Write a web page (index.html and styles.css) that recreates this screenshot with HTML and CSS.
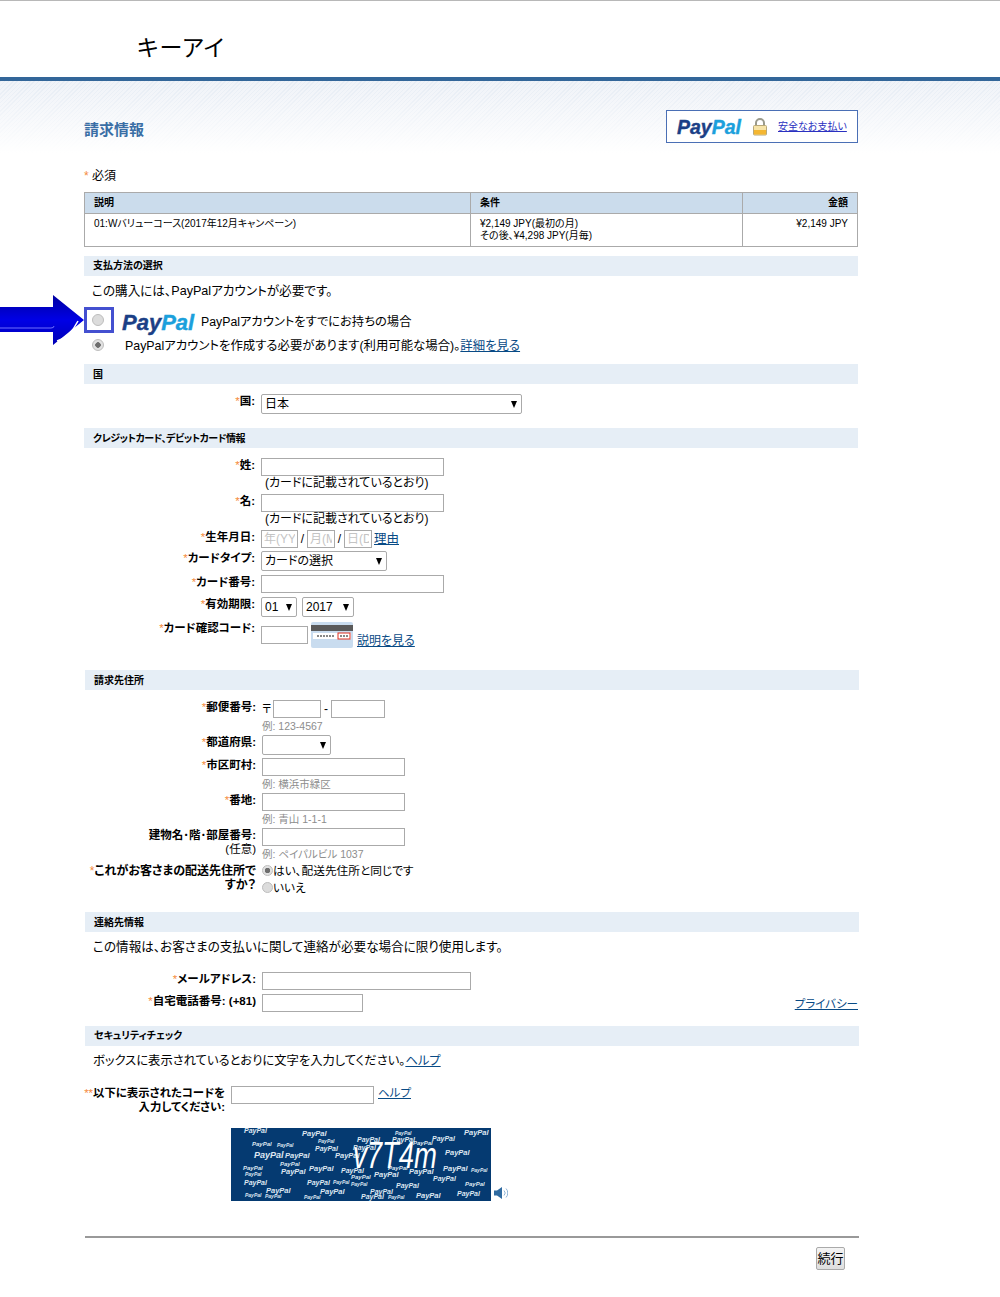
FILE: index.html
```html
<!DOCTYPE html>
<html lang="ja">
<head>
<meta charset="utf-8">
<title>請求情報</title>
<link rel="stylesheet" href="styles.css">
</head>
<body>
<header class="site-head"><span class="merchant">キーアイ</span></header>
<main class="content">
  <div class="title-row">
    <h1>請求情報</h1>
    <div class="secure-box">
      <span class="pp pp-small"><i>Pay</i><b>Pal</b></span>
      <svg class="lock" viewBox="0 0 16 18" width="16" height="18"><path d="M4 8V5a4 4 0 0 1 8 0v3" fill="none" stroke="#9a9a8c" stroke-width="2"/><rect x="1.500" y="7.500" width="13" height="9.500" rx="1" fill="#f7e4a8" stroke="#b8a878"/><rect x="2" y="12" width="12" height="4.500" fill="#f4b631"/></svg>
      <a class="secure-link" href="#">安全なお支払い</a>
    </div>
  </div>
  <p class="req"><span class="ast">*</span> 必須</p>
  <table class="order">
    <colgroup><col class="c1"><col class="c2"><col class="c3"></colgroup>
    <thead><tr><th>説明</th><th>条件</th><th class="num">金額</th></tr></thead>
    <tbody><tr><td>01:Wバリューコース(2017年12月キャンペーン)</td><td>¥2,149 JPY(最初の月)<br>その後、¥4,298 JPY(月毎)</td><td class="num">¥2,149 JPY</td></tr></tbody>
  </table>

  <h2 class="bar bar-pay">支払方法の選択</h2>
  <p class="note note-pay">この購入には、PayPalアカウントが必要です。</p>
  <div class="opt opt-one">
    <span class="focus-box"><input class="radio" type="radio" name="pay" disabled></span>
    <span class="pp pp-large"><i>Pay</i><b>Pal</b></span>
    <span class="opt-text">PayPalアカウントをすでにお持ちの場合</span>
    <svg class="arrow" viewBox="0 0 84 50" width="84" height="50"><defs><linearGradient id="ag" x1="0" y1="0" x2="0" y2="1"><stop offset="0" stop-color="#0000a0"/><stop offset=".5" stop-color="#0000e6"/><stop offset="1" stop-color="#0000b4"/></linearGradient></defs><polygon points="0,12 53,12 53,0 84,25 53,50 53,37 0,37" fill="url(#ag)"/><path d="M0 33H51q3 0 3-2" fill="none" stroke="#6f6fff" stroke-width="1"/><path d="M57 46Q70 42 78 26" fill="none" stroke="#fff" stroke-width="1.500"/></svg>
  </div>
  <div class="opt opt-two">
    <input class="radio" type="radio" name="pay" checked disabled>
    <span class="opt-text-two">PayPalアカウントを作成する必要があります(利用可能な場合)。<a href="#">詳細を見る</a></span>
  </div>

  <h2 class="bar bar-country">国</h2>
  <div class="row r-country"><label><span class="ast">*</span>国:</label><div class="field"><span class="sel s-country"><select><option>日本</option></select></span></div></div>

  <h2 class="bar bar-card">クレジットカード、デビットカード情報</h2>
  <div class="row r-name"><label><span class="ast">*</span>姓:</label><div class="field stack"><input class="in w183" type="text"><span class="as-on-card">(カードに記載されているとおり)</span></div></div>
  <div class="row r-name"><label><span class="ast">*</span>名:</label><div class="field stack"><input class="in w183" type="text"><span class="as-on-card">(カードに記載されているとおり)</span></div></div>
  <div class="row r-dob"><label><span class="ast">*</span>生年月日:</label><div class="field inline"><input class="in w37 ph" type="text" placeholder="年(YY"><span class="slash">/</span><input class="in w28 ph" type="text" placeholder="月(M"><span class="slash">/</span><input class="in w28 ph" type="text" placeholder="日(D"><a class="why" href="#">理由</a></div></div>
  <div class="row r-type"><label><span class="ast">*</span>カードタイプ:</label><div class="field"><span class="sel s-type"><select><option>カードの選択</option></select></span></div></div>
  <div class="row r-num"><label><span class="ast">*</span>カード番号:</label><div class="field"><input class="in w183" type="text"></div></div>
  <div class="row r-exp"><label><span class="ast">*</span>有効期限:</label><div class="field gap5"><span class="sel s-mon"><select><option>01</option></select></span><span class="sel s-year"><select><option>2017</option></select></span></div></div>
  <div class="row r-cvv"><label class="up1"><span class="ast">*</span>カード確認コード:</label><div class="field cvv"><input class="in w47" type="text">
    <svg class="card" viewBox="0 0 42 26" width="42" height="26"><rect width="42" height="26" rx="2" fill="#c9dcef"/><rect y="3" width="42" height="6" fill="#5a5a5a"/><rect x="2" y="11" width="38" height="6" fill="#fff"/><rect x="27" y="11" width="12" height="6" fill="#fff" stroke="#e03020"/><path d="M6 14h17M29 14h8" stroke="#888" stroke-width="2" stroke-dasharray="2 1"/></svg>
    <a class="see" href="#">説明を見る</a></div></div>

  <div class="shift">
  <h2 class="bar bar-bill">請求先住所</h2>
  <div class="row r-zip"><label><span class="ast">*</span>郵便番号:</label><div class="field stack"><span class="zip"><span class="mark">〒</span><input class="in w48" type="text"><span class="dash">-</span><input class="in w54" type="text"></span><span class="hint">例: 123-4567</span></div></div>
  <div class="row r-pref"><label><span class="ast">*</span>都道府県:</label><div class="field"><span class="sel s-pref"><select><option></option></select></span></div></div>
  <div class="row r-addr"><label><span class="ast">*</span>市区町村:</label><div class="field stack"><input class="in w143" type="text"><span class="hint">例: 横浜市緑区</span></div></div>
  <div class="row r-addr"><label><span class="ast">*</span>番地:</label><div class="field stack"><input class="in w143" type="text"><span class="hint">例: 青山 1-1-1</span></div></div>
  <div class="row r-bldg"><label>建物名･階･部屋番号:<br><span class="opt-mark">(任意)</span></label><div class="field stack"><input class="in w143" type="text"><span class="hint">例: ペイパルビル 1037</span></div></div>
  <div class="row r-ship"><label><span class="ast">*</span>これがお客さまの配送先住所で<br>すか？</label><div class="field stack ship"><span class="choice"><input class="radio" type="radio" name="ship" checked disabled>はい、配送先住所と同じです</span><span class="choice"><input class="radio" type="radio" name="ship" disabled>いいえ</span></div></div>

  <h2 class="bar bar-contact">連絡先情報</h2>
  <p class="note note-contact">この情報は、お客さまの支払いに関して連絡が必要な場合に限り使用します。</p>
  <div class="row r-mail"><label><span class="ast">*</span>メールアドレス:</label><div class="field"><input class="in w209" type="text"></div></div>
  <div class="row r-phone"><label><span class="ast">*</span>自宅電話番号: (+81)</label><div class="field spread"><input class="in w101" type="text"><a class="privacy" href="#">プライバシー</a></div></div>

  <h2 class="bar bar-sec">セキュリティチェック</h2>
  <p class="note note-sec">ボックスに表示されているとおりに文字を入力してください。<a href="#">ヘルプ</a></p>
  <div class="row r-code"><label><span class="ast">**</span>以下に表示されたコードを<br>入力してください:</label><div class="field code"><input class="in w143" type="text"><a class="help" href="#">ヘルプ</a></div></div>
  <div class="captcha-row">
    <svg class="captcha" viewBox="0 0 260 73" width="260" height="73">
      <rect width="260" height="73" fill="#053a71"/>
      <g class="cp">
        <text class="m" x="13" y="5">PayPal</text><text class="l" x="71" y="8">PayPal</text><text class="xs" x="164" y="7">PayPal</text><text class="l" x="233" y="7">PayPal</text>
        <text class="s" x="21" y="18">PayPal</text><text class="xs" x="46" y="19">PayPal</text><text class="xs" x="87" y="15">PayPal</text><text class="m" x="84" y="23">PayPal</text>
        <text class="m" x="126" y="14">PayPal</text><text class="m" x="161" y="14">PayPal</text><text class="s" x="182" y="17">PayPal</text><text class="m" x="201" y="13">PayPal</text>
        <text class="xl" x="23" y="30">PayPal</text><text class="l" x="54" y="30">PayPal</text><text class="l" x="104" y="30">PayPal</text><text class="m" x="122" y="22">PayPal</text>
        <text class="l" x="214" y="27">PayPal</text><text class="s" x="12" y="42">PayPal</text><text class="s" x="49" y="38">PayPal</text><text class="l" x="50" y="46">PayPal</text>
        <text class="l" x="78" y="43">PayPal</text><text class="m" x="110" y="45">PayPal</text><text class="s" x="157" y="42">PayPal</text><text class="l" x="178" y="46">PayPal</text>
        <text class="l" x="212" y="43">PayPal</text><text class="xs" x="240" y="44">PayPal</text><text class="xs" x="14" y="48">PayPal</text><text class="s" x="120" y="51">PayPal</text>
        <text class="l" x="143" y="49">PayPal</text><text class="m" x="202" y="53">PayPal</text><text class="m" x="13" y="57">PayPal</text><text class="m" x="76" y="57">PayPal</text>
        <text class="xs" x="102" y="56">PayPal</text><text class="xs" x="120" y="58">PayPal</text><text class="m" x="165" y="60">PayPal</text><text class="s" x="234" y="58">PayPal</text>
        <text class="l" x="35" y="65">PayPal</text><text class="l" x="89" y="66">PayPal</text><text class="m" x="139" y="66">PayPal</text><text class="xs" x="14" y="69">PayPal</text>
        <text class="xs" x="34" y="70">PayPal</text><text class="xs" x="73" y="71">PayPal</text><text class="m" x="130" y="71">PayPal</text><text class="xs" x="157" y="71">PayPal</text>
        <text class="l" x="185" y="70">PayPal</text><text class="m" x="226" y="68">PayPal</text>
      </g>
      <text class="cap-word" x="122" y="40" textLength="84" lengthAdjust="spacingAndGlyphs">v7T4m</text>
    </svg>
    <svg class="speaker" viewBox="0 0 14 14" width="14" height="14"><path d="M0 4.500h3L8 1v12L3 9.500H0z" fill="#2f6aa0"/><path d="M10 4.500a3.500 3.500 0 0 1 0 5M12 2.500a6.500 6.500 0 0 1 0 9" fill="none" stroke="#8fb4d6" stroke-width="1"/></svg>
  </div>
  <div class="actions"><button class="go" type="button">続行</button></div>
  </div>
</main>
</body>
</html>
```
FILE: styles.css
```css
html, body { margin: 0; padding: 0; }
body {
  background: #fff;
  color: #000;
  font-family: "Liberation Sans", "Noto Sans CJK JP", sans-serif;
  font-size: 12px;
  line-height: 14px;
  font-feature-settings: "palt";
  border-top: 1px solid #b8b8b8;
  min-height: 1296px;
}
a { color: #084a85; text-decoration: underline; }
p, h1, h2 { margin: 0; }

.site-head {
  box-sizing: border-box;
  height: 80px;
  border-bottom: 4px solid #336699;
  padding: 0 0 15px 137px;
  display: flex;
  align-items: flex-end;
}
.merchant { font-size: 23px; line-height: 28px; letter-spacing: 1px; }

.content {
  padding: 29px 142px 0 84px;
  background-image:
    linear-gradient(#ffffff00, #fff),
    repeating-linear-gradient(135deg, #e6ecf4 0 1px, #f0f3f8 1px 3px);
  background-size: 100% 72px;
  background-repeat: no-repeat;
}
.title-row { display: flex; justify-content: space-between; align-items: center; height: 33px; }
h1 { font-size: 15px; line-height: 20px; margin-top: 6px; color: #3a6ea5; font-weight: 700; }

.secure-box {
  box-sizing: border-box;
  width: 192px;
  height: 33px;
  border: 1px solid #4a6fb5;
  background: #fff;
  display: flex;
  align-items: center;
  padding-left: 10px;
}
.pp { font-family: "Liberation Sans", sans-serif; font-style: italic; font-weight: 700; -webkit-text-stroke: 0.400px currentColor; }
.pp i { color: #1b3f86; font-style: italic; }
.pp b { color: #1ba0dc; font-weight: 700; }
.pp-small { font-size: 19.500px; line-height: 20px; width: 66px; }
.lock { margin-left: 9px; }
.secure-link { margin-left: 10px; font-size: 10px; color: #2a30c0; }

.req { margin-top: 26px; height: 13px; }
.ast { color: #f58a3c; font-weight: 400; }
.order {
  margin-top: 10px;
  width: 774px;
  table-layout: fixed;
  border-collapse: collapse;
  font-size: 10px;
  line-height: 12px;
}
.c1 { width: 386px; }
.c2 { width: 272px; }
.order th, .order td { border: 1px solid #aaa; padding: 0 9px; text-align: left; vertical-align: top; }
.order th { background: #cbdcec; height: 20px; font-weight: 700; vertical-align: middle; }
.order td { height: 33px; padding-top: 4px; box-sizing: border-box; line-height: 12px; }
.order .num { text-align: right; }

.bar {
  box-sizing: border-box;
  height: 20px;
  background: #e6eef6;
  font-size: 10px;
  line-height: 21px;
  padding-left: 9px;
  font-weight: 700;
}
.bar-pay { margin-top: 9px; line-height: 20px; }
.bar-sec { line-height: 20px; }
.note { padding-left: 8px; height: 14px; line-height: 15px; font-size: 12.600px; }
.note-pay { margin-top: 8px; }
.opt { display: flex; align-items: center; font-size: 12.300px; }
.opt-one { position: relative; margin-top: 9px; height: 26px; }
.focus-box {
  box-sizing: border-box;
  width: 30px;
  height: 26px;
  padding: 0 2px 1px 0;
  border: 3px solid #4450d0;
  display: flex;
  align-items: center;
  justify-content: center;
}
.pp-large { font-size: 22px; line-height: 26px; width: 79px; margin: 5px 0 0 8px; }
.opt-text { margin-top: 4px; }
.arrow { position: absolute; left: -84px; top: -12px; }
.opt-two { height: 18px; margin-top: 3px; padding-left: 8px; }
.opt-two .radio { margin-right: 21px; }
.opt-text-two { padding-top: 2px; font-size: 12.400px; }

.radio {
  appearance: none;
  width: 12px;
  height: 12px;
  margin: 0;
  border-radius: 50%;
  border: 1px solid #bdbdbd;
  background: #dcdcdc;
  box-sizing: border-box;
  flex: none;
}
.radio:checked { background: radial-gradient(circle, #6e6e6e 0 2.500px, #e2e2e2 3px); }

.bar-country { margin-top: 10px; }
.row { display: grid; grid-template-columns: 171px 1fr; column-gap: 6px; }
.row label { display: block; font-weight: 700; text-align: right; line-height: 14px; font-size: 11.500px; }
.row label.up1 { margin-top: -1px; }
.field { display: flex; align-items: flex-start; }
.stack { flex-direction: column; }
.r-country { margin-top: 10px; height: 34px; }
.in {
  box-sizing: border-box;
  height: 18px;
  margin: 0;
  padding: 0 2px;
  border: 1px solid #aaa;
  background: #fff;
  font: inherit;
  outline: none;
  flex: none;
}
.w183 { width: 183px; }
.w143 { width: 143px; }
.w37 { width: 37px; }
.w28 { width: 28px; }
.w47 { width: 47px; }
.w48 { width: 48px; }
.w54 { width: 54px; }
.w101 { width: 101px; }
.w209 { width: 209px; }
.ph::placeholder { color: #c4c4c4; }

.sel { display: block; position: relative; height: 20px; }
.sel select {
  appearance: none;
  box-sizing: border-box;
  width: 100%;
  height: 20px;
  margin: 0;
  padding: 0 0 0 3px;
  border: 1px solid #aaa;
  border-radius: 2px;
  background: #fff;
  color: #000;
  font: inherit;
  font-size: 12px;
}
.sel::after {
  content: "";
  position: absolute;
  right: 5px;
  top: 7px;
  border-left: 3.500px solid transparent;
  border-right: 3.500px solid transparent;
  border-top: 7px solid #000;
}
.s-country { width: 261px; }
.s-type { width: 126px; }
.s-mon { width: 36px; }
.s-year { width: 52px; }
.s-pref { width: 69px; }

.bar-card { margin-top: 0; letter-spacing: -0.450px; }
.r-name { height: 36px; }
.bar-card + .r-name { margin-top: 10px; }
.as-on-card { padding-left: 4px; font-size: 12px; line-height: 14px; margin-top: 0; }
.r-dob { height: 21px; }
.inline { align-items: center; height: 18px; }
.slash { width: 9px; text-align: center; }
.why { margin-left: 2px; font-size: 12.500px; }
.r-type { height: 24px; }
.r-num { height: 22px; }
.r-exp { height: 25px; }
.gap5 { gap: 5px; }
.r-cvv { height: 48px; }
.cvv { position: relative; }
.cvv .in { margin-top: 4px; }
.card { margin-left: 3px; }
.see { margin: 12px 0 0 4px; font-size: 12px; }

.shift { margin-left: 1px; width: 774px; }
.hint { color: #8d8d8d; font-size: 10.500px; line-height: 12px; margin-top: 2px; }
.r-zip { margin-top: 10px; height: 35px; }
.zip { display: flex; align-items: center; height: 18px; }
.mark { width: 11px; font-size: 11px; }
.dash { width: 10px; text-align: center; }
.r-pref { height: 23px; }
.r-addr { height: 35px; }
.r-bldg { height: 36px; }
.opt-mark { font-weight: 400; }
.r-ship { height: 48px; }
.r-ship label { font-size: 12px; }
.ship { gap: 3px; padding-top: 0; font-size: 11.700px; }
.choice { display: flex; align-items: center; height: 14px; }
.choice .radio { width: 11px; height: 11px; margin-top: -1px; }

.note-contact { margin-top: 8px; }
.r-mail { margin-top: 18px; height: 22px; }
.r-phone { height: 32px; }
.spread { justify-content: space-between; padding-right: 1px; }
.privacy { font-size: 11.500px; margin-top: 3px; }

.note-sec { margin-top: 8px; font-size: 12.300px; }
.r-code { margin-top: 18px; height: 42px; grid-template-columns: 140px 1fr; }
.r-code label { font-size: 11.400px; white-space: nowrap; justify-self: end; }
.code a { margin-left: 4px; font-size: 11.500px; }
.captcha-row { display: flex; align-items: flex-end; margin-left: 146px; height: 73px; }
.captcha { display: block; }
.speaker { margin: 0 0 1px 3px; }
.cp text { fill: #dfe8f2; font-family: "Liberation Sans", sans-serif; font-weight: 700; font-style: italic; }
.cp .xs { font-size: 5px; }
.cp .s { font-size: 6px; }
.cp .m { font-size: 7px; }
.cp .l { font-size: 7.500px; }
.cp .xl { font-size: 9px; }
.cap-word { fill: #fff; font-family: "Liberation Sans", sans-serif; font-style: italic; font-size: 36px; }

.actions {
  margin-top: 35px;
  border-top: 2px solid #999;
  height: 34px;
  padding-top: 9px;
  display: flex;
  justify-content: flex-end;
}
.go {
  box-sizing: border-box;
  width: 29px;
  height: 23px;
  margin-right: 14px;
  padding: 0;
  border: 1px solid #aaa;
  border-radius: 2px;
  background: linear-gradient(#f4f4f4, #dedede);
  font: inherit;
  font-size: 13px;
}
```
